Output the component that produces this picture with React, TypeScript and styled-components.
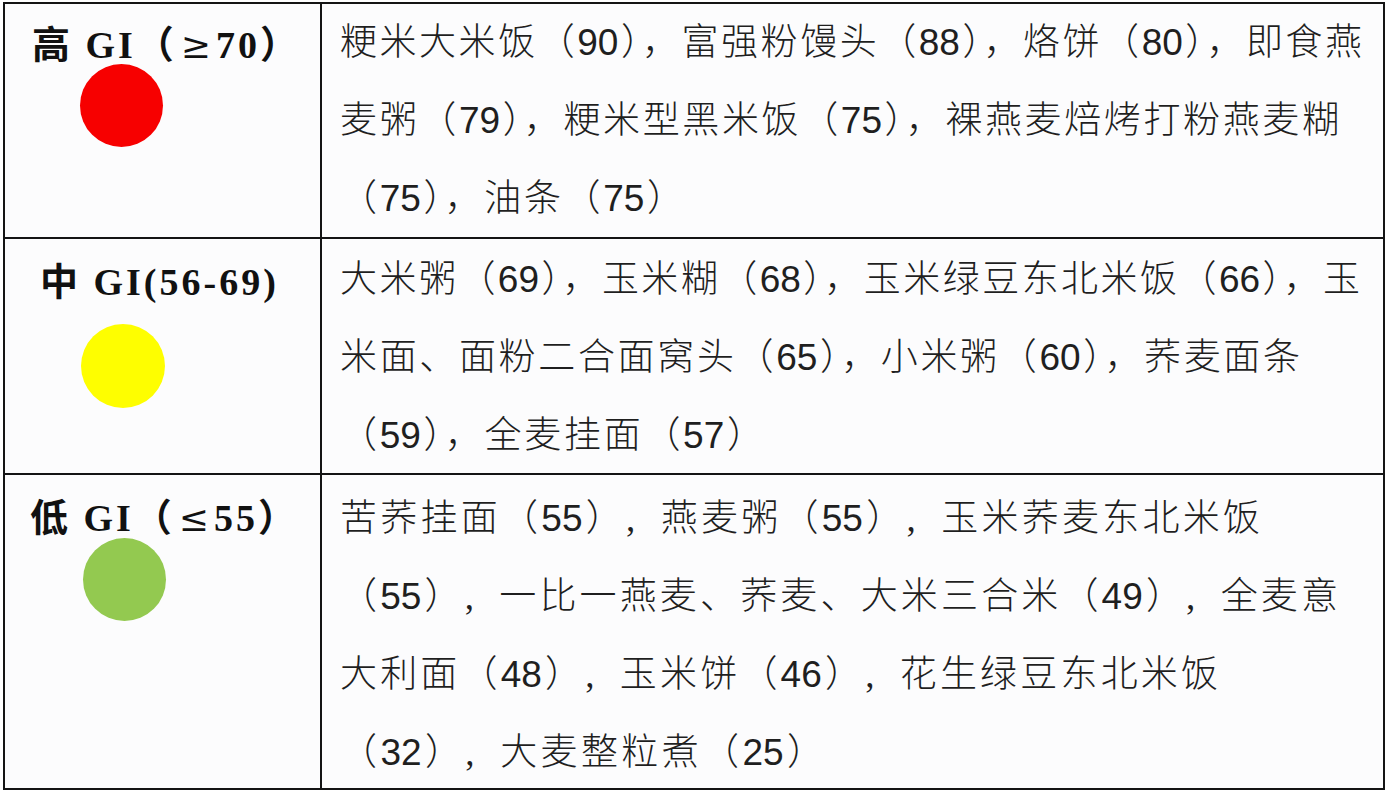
import React from "react";
import styled, { createGlobalStyle } from "styled-components";

const GlobalStyle = createGlobalStyle`
  html, body {
    margin: 0;
    padding: 0;
    background: #ffffff;
  }
  body {
    font-family: "Noto Sans CJK SC", sans-serif;
  }
`;

const Page = styled.div`
  box-sizing: border-box;
  width: 1388px;
  padding: 2px 0 0 3px;
`;

const Table = styled.div`
  box-sizing: border-box;
  width: 1382px;
  border: 2px solid #141414;
  background: #fcfcfd;
  display: flex;
  flex-direction: column;
`;

const Row = styled.div<{ $h: number; $first?: boolean }>`
  display: grid;
  grid-template-columns: 317px 1fr;
  height: ${(p) => p.$h + (p.$first ? 0 : 2)}px;
  border-top: ${(p) => (p.$first ? "none" : "2px solid #141414")};
  box-sizing: border-box;
`;

const LabelCell = styled.div`
  box-sizing: border-box;
  border-right: 2px solid #141414;
  display: flex;
  flex-direction: column;
  align-items: flex-start;
`;

const Label = styled.div<{ $left: number; $top: number }>`
  margin: ${(p) => p.$top}px 0 0 ${(p) => p.$left}px;
  font-family: "Liberation Serif", "Noto Sans CJK SC", serif;
  font-weight: 700;
  font-size: 38px;
  line-height: 40px;
  height: 40px;
  color: #111111;
  white-space: nowrap;
  letter-spacing: 3px;
`;

const Sym = styled.span`
  font-family: "DejaVu Serif", serif;
  font-weight: 400;
  font-size: 36px;
  margin: 0 2px 0 4px;
`;

const Dot = styled.div<{ $color: string; $left: number; $top: number; $size: number }>`
  width: ${(p) => p.$size}px;
  height: ${(p) => p.$size}px;
  border-radius: 50%;
  background: ${(p) => p.$color};
  margin: ${(p) => p.$top}px 0 0 ${(p) => p.$left}px;
  flex: none;
`;

const TextCell = styled.div<{ $top: number }>`
  padding: ${(p) => p.$top}px 0 0 18px;
  display: flex;
  flex-direction: column;
  align-items: flex-start;
`;

const Line = styled.div<{ $w: number }>`
  width: ${(p) => p.$w}px;
  font-family: "Liberation Sans", "Noto Sans CJK SC", sans-serif;
  font-weight: 300;
  font-size: 37px;
  line-height: 78px;
  height: 78px;
  color: #1f1f1f;
  white-space: nowrap;
  text-align: justify;
  text-align-last: justify;
`;

const CenteredComma = styled.span`
  display: inline-block;
  width: 0.85em;
  line-height: 1;
  text-align: left;
  text-align-last: left;
  font-family: "Liberation Serif", serif;
  font-weight: 400;
`;

type RowData = {
  head: string;
  sym?: string;
  tail: string;
  labelLeft: number;
  labelTop: number;
  dotColor: string;
  dotLeft: number;
  dotTop: number;
  dotSize: number;
  height: number;
  textTop: number;
  centeredComma?: boolean;
  lines: { text: string; w: number }[];
};

const rows: RowData[] = [
  {
    head: "高 GI（",
    sym: "≥",
    tail: "70）",
    labelLeft: 27,
    labelTop: 21,
    dotColor: "#f70000",
    dotLeft: 75,
    dotTop: -1,
    dotSize: 83,
    height: 233,
    textTop: 0,
    lines: [
      { text: "粳米大米饭（90），富强粉馒头（88），烙饼（80），即食燕", w: 1022 },
      { text: "麦粥（79），粳米型黑米饭（75），裸燕麦焙烤打粉燕麦糊", w: 999 },
      { text: "（75），油条（75）", w: 344 },
    ],
  },
  {
    head: "中 GI(56-69)",
    tail: "",
    labelLeft: 35,
    labelTop: 23,
    dotColor: "#fefe00",
    dotLeft: 76,
    dotTop: 22,
    dotSize: 84,
    height: 234,
    textTop: 2,
    lines: [
      { text: "大米粥（69），玉米糊（68），玉米绿豆东北米饭（66），玉", w: 1020 },
      { text: "米面、面粉二合面窝头（65），小米粥（60），荞麦面条", w: 960 },
      { text: "（59），全麦挂面（57）", w: 424 },
    ],
  },
  {
    head: "低 GI（",
    sym: "≤",
    tail: "55）",
    labelLeft: 25,
    labelTop: 23,
    dotColor: "#93c950",
    dotLeft: 78,
    dotTop: 0,
    dotSize: 83,
    height: 313,
    textTop: 5,
    centeredComma: true,
    lines: [
      { text: "苦荞挂面（55），燕麦粥（55），玉米荞麦东北米饭", w: 920 },
      { text: "（55），一比一燕麦、荞麦、大米三合米（49），全麦意", w: 998 },
      { text: "大利面（48），玉米饼（46），花生绿豆东北米饭", w: 878 },
      { text: "（32），大麦整粒煮（25）", w: 484 },
    ],
  },
];

function renderText(text: string, centered?: boolean) {
  if (!centered) return text;
  const parts = text.split("，");
  return parts.map((part, i) => (
    <React.Fragment key={i}>
      {part}
      {i < parts.length - 1 && <CenteredComma>,</CenteredComma>}
    </React.Fragment>
  ));
}

export default function App() {
  return (
    <>
      <GlobalStyle />
      <Page>
        <Table>
          {rows.map((r, i) => (
            <Row key={i} $h={r.height} $first={i === 0}>
              <LabelCell>
                <Label $left={r.labelLeft} $top={r.labelTop}>
                  {r.head}
                  {r.sym && <Sym>{r.sym}</Sym>}
                  {r.tail}
                </Label>
                <Dot $color={r.dotColor} $left={r.dotLeft} $top={r.dotTop} $size={r.dotSize} />
              </LabelCell>
              <TextCell $top={r.textTop}>
                {r.lines.map((l, j) => (
                  <Line key={j} $w={l.w}>
                    {renderText(l.text, r.centeredComma)}
                  </Line>
                ))}
              </TextCell>
            </Row>
          ))}
        </Table>
      </Page>
    </>
  );
}
